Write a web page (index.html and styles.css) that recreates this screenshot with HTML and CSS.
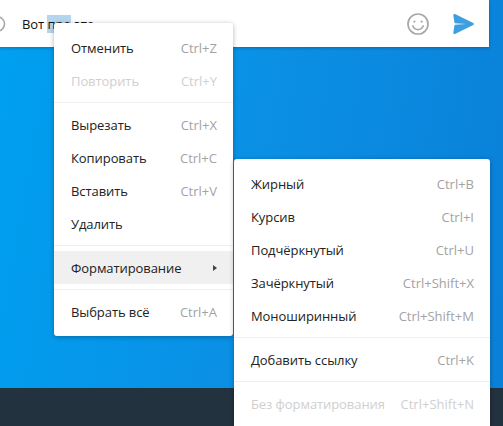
FILE: index.html
```html
<!DOCTYPE html>
<html lang="ru">
<head>
<meta charset="utf-8">
<title>Контекстное меню</title>
<link rel="stylesheet" href="styles.css">
</head>
<body>
<div class="page">
  <main class="stage">
    <div class="composer">
      <svg class="clip" width="6" height="20" viewBox="0 0 6 20"><circle cx="-2.500" cy="10" r="7" fill="none" stroke="#a6a6a6" stroke-width="1.600"/></svg>
      <div class="message">Вот <span class="selected">про</span> это</div>
      <svg class="smile" width="24" height="24" viewBox="0 0 24 24" fill="none" stroke="#a8a8a8" stroke-width="1.700">
        <circle cx="12" cy="12" r="10"/>
        <circle cx="8.400" cy="9.600" r="1.100" fill="#a8a8a8" stroke="none"/>
        <circle cx="15.600" cy="9.600" r="1.100" fill="#a8a8a8" stroke="none"/>
        <path d="M6.800 14c1 2.400 3 3.600 5.200 3.600s4.200-1.200 5.200-3.600" stroke-linecap="round"/>
      </svg>
      <svg class="send" width="21" height="20" viewBox="0 0 21 20"><path d="M.3 1.300C.3.300 1.200-.2 2-.0L20.200 8.900c1 .5 1 1.700 0 2.200L2 19.900c-.8.300-1.700-.2-1.700-1.200L1.600 10.700 13 10 1.600 9.300z" fill="#3d9fe0"/></svg>
    </div>
  </main>
  <footer class="footer"></footer>

  <div class="menu menu-main">
    <div class="item"><span>Отменить</span><span class="key">Ctrl+Z</span></div>
    <div class="item disabled"><span>Повторить</span><span class="key">Ctrl+Y</span></div>
    <div class="sep"></div>
    <div class="item"><span>Вырезать</span><span class="key">Ctrl+X</span></div>
    <div class="item"><span>Копировать</span><span class="key">Ctrl+C</span></div>
    <div class="item"><span>Вставить</span><span class="key">Ctrl+V</span></div>
    <div class="item"><span>Удалить</span></div>
    <div class="sep"></div>
    <div class="item active"><span>Форматирование</span><span class="arrow"></span></div>
    <div class="sep"></div>
    <div class="item"><span>Выбрать всё</span><span class="key">Ctrl+A</span></div>
  </div>

  <div class="menu menu-sub">
    <div class="item"><span>Жирный</span><span class="key">Ctrl+B</span></div>
    <div class="item"><span>Курсив</span><span class="key">Ctrl+I</span></div>
    <div class="item"><span>Подчёркнутый</span><span class="key">Ctrl+U</span></div>
    <div class="item"><span>Зачёркнутый</span><span class="key">Ctrl+Shift+X</span></div>
    <div class="item"><span>Моноширинный</span><span class="key">Ctrl+Shift+M</span></div>
    <div class="sep"></div>
    <div class="item"><span>Добавить ссылку</span><span class="key">Ctrl+K</span></div>
    <div class="sep"></div>
    <div class="item disabled"><span>Без форматирования</span><span class="key">Ctrl+Shift+N</span></div>
  </div>
</div>
</body>
</html>
```

FILE: styles.css
```css
html, body {
  margin: 0;
  padding: 0;
  overflow: hidden;
}

.page {
  position: relative;
  width: 503px;
  height: 426px;
  overflow: hidden;
  display: flex;
  flex-direction: column;
  font-family: "Open Sans", sans-serif;
  font-size: 13px;
  color: #222;
}

.stage {
  flex: 1;
  background: linear-gradient(100deg, #00a0f0 0%, #0a90e5 50%, #0a80d8 100%);
}

.footer {
  height: 38px;
  background: #23323f;
}

.composer {
  width: 489px;
  height: 47px;
  display: flex;
  align-items: center;
  background: #fff;
  box-shadow: 0 1px 3px rgba(0, 0, 0, .25);
}

.clip {
  flex: none;
}

.message {
  flex: 1;
  margin-left: 16px;
  line-height: 18px;
  letter-spacing: -.08px;
  color: #111;
}

.selected {
  background: #b5d5ef;
}

.smile {
  flex: none;
  margin-right: 23px;
}

.send {
  flex: none;
  margin-right: 15px;
}

.menu {
  position: absolute;
  box-sizing: border-box;
  padding: 8px 0;
  background: #fff;
  border-radius: 3px;
  box-shadow: 0 1px 5px rgba(0, 0, 0, .3);
}

.menu-main {
  left: 54px;
  top: 23px;
  width: 179px;
}

.menu-sub {
  left: 234px;
  top: 159px;
  width: 256px;
}

.item {
  display: flex;
  align-items: center;
  justify-content: space-between;
  height: 33px;
  padding: 0 16px 0 17px;
  white-space: nowrap;
  letter-spacing: -.08px;
}

.key {
  letter-spacing: 0;
  color: #a3a3a3;
}

.disabled,
.disabled .key {
  color: #cfcfcf;
}

.active {
  background: #f0f0f0;
}

.arrow {
  width: 0;
  height: 0;
  border-left: 4px solid #444;
  border-top: 3.500px solid transparent;
  border-bottom: 3.500px solid transparent;
}

.sep {
  height: 1px;
  margin: 5px 0;
  background: #efefef;
}
```
